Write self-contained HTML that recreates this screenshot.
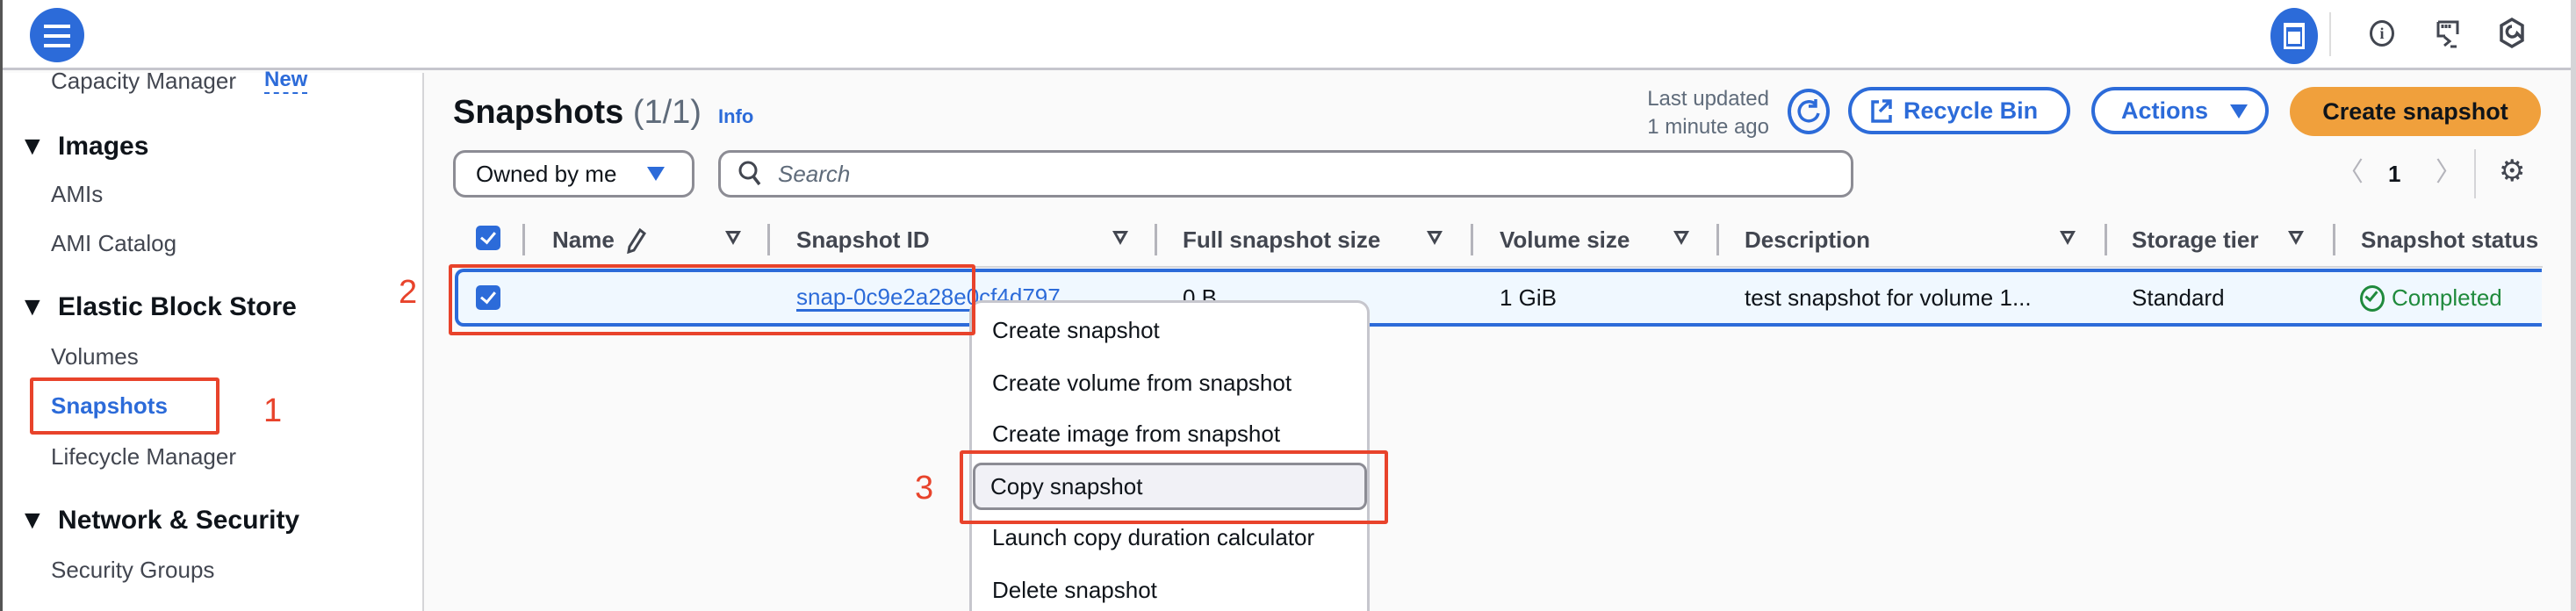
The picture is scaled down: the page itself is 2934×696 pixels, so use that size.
<!DOCTYPE html>
<html><head><meta charset="utf-8"><style>
*{margin:0;padding:0;box-sizing:border-box}
html,body{width:2934px;height:696px;overflow:hidden}
body{background:#fafafa;font-family:"Liberation Sans",sans-serif;color:#0f141a;position:relative}
.t{position:absolute;white-space:nowrap;line-height:30px;font-size:26px}
.b{font-weight:bold}
.h{font-weight:bold;color:#424650}
.red{position:absolute;border:4px solid #e8432b;border-radius:3px}
.rn{position:absolute;color:#e8432b;font-size:38px;line-height:40px}
.sep{position:absolute;width:3px;background:#b4b4bb;height:36px;top:255px}
.fi{position:absolute;top:263px;width:0;height:0;border-left:9px solid transparent;border-right:9px solid transparent;border-top:16px solid #424650}
.fi:after{content:"";position:absolute;left:-4px;top:-13px;border-left:4px solid transparent;border-right:4px solid transparent;border-top:7px solid #fafafa}
.cb{position:absolute;width:28px;height:28px;background:#2c6bd9;border-radius:5px}
.cb:after{content:"";position:absolute;left:9px;top:4px;width:7px;height:13px;border-right:3px solid #fff;border-bottom:3px solid #fff;transform:rotate(40deg)}
</style></head><body>
<div style="position:absolute;left:0;top:0;width:2934px;height:80px;background:#fff;border-bottom:3px solid #c6c6cd"></div>
<div style="position:absolute;left:0;top:0;width:3px;height:696px;background:#555"></div>
<div style="position:absolute;left:2928px;top:0;width:6px;height:696px;background:#d5d5d8"></div>
<div style="position:absolute;left:34px;top:9px;width:62px;height:62px;border-radius:50%;background:#2c6bd9"></div>
<div style="position:absolute;left:50px;top:28px;width:30px;height:4px;background:#fff;box-shadow:0 11px 0 #fff,0 22px 0 #fff"></div>
<div style="position:absolute;left:2586px;top:9px;width:54px;height:64px;border-radius:50%;background:#2c6bd9"></div>
<div style="position:absolute;left:2601px;top:26px;width:24px;height:30px;border:3px solid #fff;border-top-width:5px"></div>
<div style="position:absolute;left:2606px;top:36px;width:14px;height:14px;background:#fff"></div>
<div style="position:absolute;left:2653px;top:14px;width:2px;height:50px;background:#ddd"></div>
<div style="position:absolute;left:2699px;top:23px;width:28px;height:30px;border:3px solid #424650;border-radius:50%;font:bold 18px/24px 'Liberation Serif',serif;text-align:center;color:#424650">i</div>
<svg style="position:absolute;left:2774px;top:22px" width="30" height="34" viewBox="0 0 30 34"><path d="M3 3h22v14M3 3v16h8M8 6v4M12 6v4M16 6v4M10 20l6 5-6 5M17 31h7" fill="none" stroke="#424650" stroke-width="3"/></svg>
<svg style="position:absolute;left:2846px;top:20px" width="30" height="36" viewBox="0 0 30 36"><path d="M15 2L27 9v17L15 33 3 26V9z M15 10a6 6 0 1 0 6 8l6 6" fill="none" stroke="#424650" stroke-width="3.5"/></svg>
<div style="position:absolute;left:3px;top:83px;width:480px;height:613px;background:#fff;border-right:2px solid #d5d5d8"></div>
<div class="t" style="left:58px;top:77px;color:#424650">Capacity Manager</div>
<div class="t b" style="left:301px;top:77px;color:#2c6bd9;font-size:24px;border-bottom:2px dashed #2c6bd9;line-height:28px">New</div>
<div class="t b" style="left:22px;top:150px;font-size:30px;line-height:34px">▼ <span style="margin-left:6px">Images</span></div>
<div class="t" style="left:58px;top:206px;color:#424650">AMIs</div>
<div class="t" style="left:58px;top:262px;color:#424650">AMI Catalog</div>
<div class="t b" style="left:22px;top:333px;font-size:30px;line-height:34px">▼ <span style="margin-left:6px">Elastic Block Store</span></div>
<div class="t" style="left:58px;top:391px;color:#424650">Volumes</div>
<div class="t b" style="left:58px;top:447px;color:#2c6bd9">Snapshots</div>
<div class="t" style="left:58px;top:505px;color:#424650">Lifecycle Manager</div>
<div class="t b" style="left:22px;top:576px;font-size:30px;line-height:34px">▼ <span style="margin-left:6px">Network &amp; Security</span></div>
<div class="t" style="left:58px;top:634px;color:#424650">Security Groups</div>
<div class="t b" style="left:516px;top:106px;font-size:38px;line-height:44px">Snapshots <span style="font-weight:normal;color:#5f6b7a">(1/1)</span></div>
<div class="t b" style="left:818px;top:118px;font-size:22px;color:#2c6bd9">Info</div>
<div class="t" style="left:1830px;top:97px;width:185px;text-align:right;color:#5f6b7a;font-size:24px;line-height:32px">Last updated<br>1 minute ago</div>
<div style="position:absolute;left:2036px;top:101px;width:48px;height:52px;border:4px solid #2c6bd9;border-radius:50%"></div>
<svg style="position:absolute;left:2044px;top:111px" width="32" height="32" viewBox="0 0 32 32"><path d="M24 8A11 11 0 1 0 27 18M24 2v8h-8" fill="none" stroke="#2c6bd9" stroke-width="3.5"/></svg>
<div style="position:absolute;left:2105px;top:99px;width:253px;height:54px;border:4px solid #2c6bd9;border-radius:27px;background:#fff"></div>
<svg style="position:absolute;left:2130px;top:112px" width="26" height="28" viewBox="0 0 26 28"><path d="M10 4H3v22h20v-7M14 3h9v9M23 3L11 15" fill="none" stroke="#2c6bd9" stroke-width="3.5"/></svg>
<div class="t b" style="left:2168px;top:111px;color:#2c6bd9;font-size:27px">Recycle Bin</div>
<div style="position:absolute;left:2382px;top:99px;width:202px;height:54px;border:4px solid #2c6bd9;border-radius:27px;background:#fff"></div>
<div class="t b" style="left:2416px;top:111px;color:#2c6bd9;font-size:27px">Actions</div>
<div style="position:absolute;left:2540px;top:119px;border-left:10px solid transparent;border-right:10px solid transparent;border-top:16px solid #2c6bd9"></div>
<div style="position:absolute;left:2608px;top:99px;width:286px;height:56px;border-radius:28px;background:#f0a03c"></div>
<div class="t b" style="left:2608px;top:112px;width:286px;text-align:center;font-size:27px">Create snapshot</div>
<div style="position:absolute;left:516px;top:171px;width:275px;height:54px;border:3px solid #8c8c94;border-radius:14px;background:#fff"></div>
<div class="t" style="left:542px;top:183px">Owned by me</div>
<div style="position:absolute;left:737px;top:190px;border-left:10px solid transparent;border-right:10px solid transparent;border-top:16px solid #2c6bd9"></div>
<div style="position:absolute;left:818px;top:171px;width:1293px;height:54px;border:3px solid #8c8c94;border-radius:14px;background:#fff"></div>
<svg style="position:absolute;left:840px;top:182px" width="30" height="32" viewBox="0 0 30 32"><circle cx="12" cy="12" r="9" fill="none" stroke="#424650" stroke-width="3"/><path d="M18 19l7 9" stroke="#424650" stroke-width="3.5"/></svg>
<div class="t" style="left:886px;top:183px;font-style:italic;color:#5f6b7a">Search</div>
<div class="t" style="left:2662px;top:182px;color:#b4b4bb;font-size:30px">〈</div>
<div class="t b" style="left:2720px;top:183px">1</div>
<div class="t" style="left:2774px;top:182px;color:#b4b4bb;font-size:30px">〉</div>
<div style="position:absolute;left:2818px;top:170px;width:2px;height:56px;background:#d5d5d8"></div>
<div class="t" style="left:2846px;top:180px;font-size:34px;color:#424650">⚙</div>
<div class="cb" style="left:542px;top:257px"></div>
<div class="sep" style="left:595px"></div>
<div class="t h" style="left:629px;top:258px">Name</div>
<svg style="position:absolute;left:713px;top:259px" width="24" height="30" viewBox="0 0 24 30"><path d="M16 3l5 4-12 19-6 2 1-6z" fill="none" stroke="#424650" stroke-width="3"/></svg>
<div class="fi" style="left:826px"></div>
<div class="sep" style="left:874px"></div>
<div class="t h" style="left:907px;top:258px">Snapshot ID</div>
<div class="fi" style="left:1267px"></div>
<div class="sep" style="left:1315px"></div>
<div class="t h" style="left:1347px;top:258px">Full snapshot size</div>
<div class="fi" style="left:1625px"></div>
<div class="sep" style="left:1675px"></div>
<div class="t h" style="left:1708px;top:258px">Volume size</div>
<div class="fi" style="left:1906px"></div>
<div class="sep" style="left:1955px"></div>
<div class="t h" style="left:1987px;top:258px">Description</div>
<div class="fi" style="left:2346px"></div>
<div class="sep" style="left:2397px"></div>
<div class="t h" style="left:2428px;top:258px">Storage tier</div>
<div class="fi" style="left:2606px"></div>
<div class="sep" style="left:2657px"></div>
<div class="t h" style="left:2689px;top:258px">Snapshot status</div>
<div style="position:absolute;left:516px;top:303px;width:2380px;height:2px;background:#d5d5d8"></div>
<div style="position:absolute;left:518px;top:306px;width:2377px;height:66px;border:4px solid #2c6bd9;border-radius:10px 0 0 10px;border-right:none;background:#f0f8ff"></div>
<div class="cb" style="left:542px;top:325px"></div>
<div class="t" style="left:907px;top:324px;color:#2c6bd9;border-bottom:3px solid #2c6bd9;line-height:28px">snap-0c9e2a28e0cf4d797</div>
<div class="t" style="left:1347px;top:324px">0 B</div>
<div class="t" style="left:1708px;top:324px">1 GiB</div>
<div class="t" style="left:1987px;top:324px">test snapshot for volume 1...</div>
<div class="t" style="left:2428px;top:324px">Standard</div>
<div style="position:absolute;left:2688px;top:325px;width:28px;height:30px;border:3px solid #1f8a3c;border-radius:50%"></div>
<div style="position:absolute;left:2697px;top:329px;width:8px;height:14px;border-right:3px solid #1f8a3c;border-bottom:3px solid #1f8a3c;transform:rotate(40deg)"></div>
<div class="t" style="left:2724px;top:324px;color:#1f8a3c">Completed</div>
<div style="position:absolute;left:1104px;top:342px;width:456px;height:354px;background:#fff;border:3px solid #c6c6cd;border-bottom:none;border-radius:14px 14px 0 0"></div>
<div style="position:absolute;left:1108px;top:527px;width:449px;height:54px;background:#f1f1f6;border:3px solid #8c8c94;border-radius:10px"></div>
<div class="t" style="left:1130px;top:361px">Create snapshot</div>
<div class="t" style="left:1130px;top:421px">Create volume from snapshot</div>
<div class="t" style="left:1130px;top:479px">Create image from snapshot</div>
<div class="t" style="left:1128px;top:539px">Copy snapshot</div>
<div class="t" style="left:1130px;top:597px">Launch copy duration calculator</div>
<div class="t" style="left:1130px;top:657px">Delete snapshot</div>
<div class="red" style="left:511px;top:301px;width:600px;height:81px"></div>
<div class="rn" style="left:454px;top:313px">2</div>
<div class="red" style="left:34px;top:430px;width:216px;height:65px"></div>
<div class="rn" style="left:300px;top:448px">1</div>
<div class="red" style="left:1093px;top:513px;width:488px;height:84px"></div>
<div class="rn" style="left:1042px;top:536px">3</div>
</body></html>
